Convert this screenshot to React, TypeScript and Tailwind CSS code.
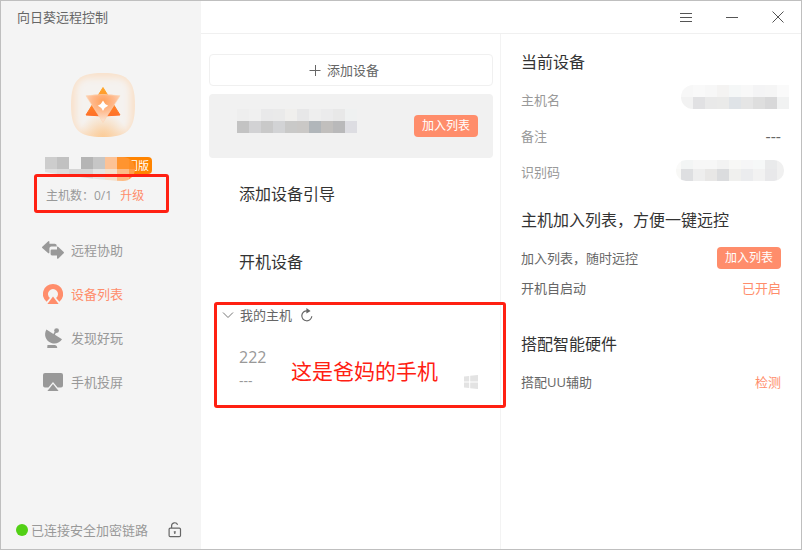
import type { ReactNode } from 'react';
import { clsx } from 'clsx';

type NavItem = {
  label: string;
  icon: ReactNode;
  active?: boolean;
};

const navItems: NavItem[] = [
  {
    label: '远程协助',
    icon: (
      <svg width="22" height="20" viewBox="0 0 22 20" fill="currentColor">
        <path d="M.3 6.8 6 1.4Q7.4.4 7.4 2V3.8H12.6Q14.8 3.8 14.8 6V6.6H9.4Q7.4 6.6 7.4 8.6V12.6Q7.4 14 6 13L.3 8Q-.3 7.4.3 6.8Z" />
        <path d="M21.7 13.2 16.4 18.4Q15 19.4 15 18V15.4H10Q8.6 15.4 8.6 14V10.6Q8.6 9.4 9.8 9.4H15V7.4Q15 6 16.4 7L21.7 12Q22.3 12.6 21.7 13.2Z" />
      </svg>
    ),
  },
  {
    label: '设备列表',
    active: true,
    icon: (
      <svg width="20" height="20" viewBox="0 0 20 20" fill="currentColor">
        <path d="M10 0A10 10 0 0 0 3.6 17.7L6.9 14A5 5 0 1 1 13.1 14L16.4 17.7A10 10 0 0 0 10 0Z" />
        <path d="M10 12.6 15.6 20H4.4Z" />
      </svg>
    ),
  },
  {
    label: '发现好玩',
    icon: (
      <svg width="20" height="20" viewBox="0 0 20 20" fill="currentColor">
        <path d="M3.4 1.4 10.4 6 11.8 3.4 13.2 4.2 11.9 6.8 19 11.2C17 14.6 12.6 16.4 8.4 14.9 2.4 12.8.6 6.4 3.4 1.4Z" />
        <circle cx="13.6" cy="2.6" r="2.4" />
        <path d="M4.5 17H12Q14.3 17.6 14.3 20H4.2Z" />
      </svg>
    ),
  },
  {
    label: '手机投屏',
    icon: (
      <svg width="20" height="20" viewBox="0 0 20 20" fill="currentColor">
        <path d="M2 1H18Q20 1 20 3V13.5Q20 15.5 18 15.5H14.6L10 10 5.4 15.5H2Q0 15.5 0 13.5V3Q0 1 2 1Z" />
        <path d="M10 12 15.6 19H4.4Z" />
      </svg>
    ),
  },
];

const deviceTiles = [
  ['#eeeeee', '#f0f0f0', '#e9e9ea', '#eaeaea', '#f0efed', '#e7e7e8', '#eeeeee', '#ebebec', '#e8e8e8', '#eff1f1'],
  ['#c3c3c3', '#d2d2d4', '#c9c9c9', '#d2d3d5', '#c9c9c8', '#cac8c6', '#b1b6ba', '#c1bfbd', '#b9b9ba', '#dddde2'],
];

const hostTiles = [
  ['#f7f7f7', '#f9f9f9', '#f7f7f7', '#f4f3f2', '#f5f7f7', '#f8f8f8', '#f4f4f5', '#f5f5f5', '#fafafa'],
  ['#f2f2f2', '#e1e1e3', '#e9e9e9', '#eaeae9', '#dfe3e7', '#e5e5e5', '#dedede', '#d8d8d9', '#f1f2f2'],
];

const codeTiles = [
  ['#fafaf9', '#f3f5f5', '#f7f7f7', '#f7f7f7', '#f3f3f3', '#f8f8f6', '#f6f6f7', '#f6f8f8', '#e9eaeb', '#f0f0f0'],
  ['#f8f8f6', '#dedfe1', '#eeeeee', '#e8e7e6', '#dbdcde', '#f0f0ee', '#ebecee', '#f2f2f2', '#e8e8ea', '#f0f0f0'],
];

const nameTiles = [
  ['#cdcdcd', '#c1c1c1', '#f4f4f4', '#b5b5b5', '#c6c6c6', '#fcc296', '#ff942f', '#ff8f24'],
  ['#e0e0e0', '#dcdcdc', '#d6d6d6', '#d6d6d6', '#e4e4e4', '#f5dfcb', '#fdbb85', '#ff9f4a'],
];

function Mosaic({ tiles, className }: { tiles: string[][]; className?: string }) {
  return (
    <svg
      width={tiles[0].length * 12}
      height={24}
      shapeRendering="crispEdges"
      aria-hidden="true"
      className={className}
    >
      {tiles.map((row, y) =>
        row.map((color, x) => (
          <rect key={`${x}-${y}`} x={x * 12} y={y * 12} width="12" height="12" fill={color} />
        ))
      )}
    </svg>
  );
}

function Logo() {
  return (
    <svg width="64" height="64" viewBox="0 0 64 64" className="ml-1" aria-hidden="true">
      <defs>
        <clipPath id="tile">
          <path d="M32 0C54 0 64 5 64 32S54 64 32 64 0 59 0 32 10 0 32 0Z" />
        </clipPath>
        <filter id="soft" x="-20%" y="-20%" width="140%" height="140%">
          <feGaussianBlur stdDeviation="3" />
        </filter>
        <radialGradient id="glow" cx="0.5" cy="1" r="0.38">
          <stop offset="0" stopColor="#fbcc98" />
          <stop offset="1" stopColor="#fbcc98" stopOpacity="0" />
        </radialGradient>
        <linearGradient id="up" x1="0" y1="0" x2="0" y2="1">
          <stop offset="0" stopColor="#ffa82c" />
          <stop offset="1" stopColor="#ff6f28" />
        </linearGradient>
        <radialGradient id="down" cx="0.5" cy="0.25" r="0.65">
          <stop offset="0" stopColor="#ffa05a" />
          <stop offset="0.5" stopColor="#ffb98c" />
          <stop offset="1" stopColor="#fbdfcb" />
        </radialGradient>
      </defs>
      <g clipPath="url(#tile)">
        <rect width="64" height="64" fill="#f9e2cc" />
        <rect x="5" y="5" width="54" height="54" rx="13" fill="#f5f2ef" filter="url(#soft)" />
        <rect width="64" height="64" fill="url(#glow)" />
      </g>
      <path
        d="M32 14.5 49 42Q32 44 15 42Z"
        fill="url(#up)"
        stroke="url(#up)"
        strokeWidth="1"
        strokeLinejoin="round"
      />
      <path
        d="M32 49.5 15 22.8Q32 20 49 22.8Z"
        fill="url(#down)"
        stroke="#fbd5b4"
        strokeWidth="0.6"
        strokeLinejoin="round"
      />
      <path d="M32 27.5Q33.4 31.3 37.2 32.7 33.4 34.1 32 38 30.6 34.1 26.8 32.7 30.6 31.3 32 27.5Z" fill="#fff" />
    </svg>
  );
}

function JoinButton() {
  return (
    <button type="button" className="h-[22px] w-16 rounded bg-[#ff8d6b] text-xs leading-[22px] text-white">
      加入列表
    </button>
  );
}

function Row({ label, tall, children }: { label: string; tall?: boolean; children: ReactNode }) {
  return (
    <div
      className={clsx(
        'flex items-center justify-between',
        tall ? 'h-9 text-[#999999]' : 'h-[30px] text-[#666666]'
      )}
    >
      <span>{label}</span>
      {children}
    </div>
  );
}

function Sidebar() {
  return (
    <aside className="flex w-[200px] shrink-0 flex-col bg-[#f4f4f4] text-[#999999]">
      <h1 className="flex h-8 items-center pl-4 text-[#666666]">向日葵远程控制</h1>
      <div className="mt-10 flex justify-center">
        <Logo />
      </div>

      <div className="relative mt-5 ml-11 flex h-[17px] w-[107px] justify-end">
        <span className="w-[42px] rounded-sm bg-[#ff8400] pr-[3px] text-right text-[11px] leading-[17px] text-white">
          门版
        </span>
        <Mosaic
          tiles={nameTiles}
          className="absolute top-0 left-0 [clip-path:path('M0_0H78A12_12_0_0_1_78_24Q50_23_0_15Z')]"
        />
      </div>

      <div className="relative ml-[33px] flex h-[39px] w-[135px] items-center gap-2 rounded-[3px] border-3 border-[#ff2012] pt-1 pl-[9px] text-xs">
        <span>主机数：0/1</span>
        <a href="#upgrade" className="text-[#ff8d6b]">
          升级
        </a>
      </div>

      <nav className="mt-[15px]">
        {navItems.map((item) => (
          <a
            key={item.label}
            href="#nav"
            className={clsx('flex h-11 items-center pl-[41px]', item.active && 'text-[#ff8d6b]')}
          >
            <span className="flex w-[22px] justify-center">{item.icon}</span>
            <span className="ml-[7px]">{item.label}</span>
          </a>
        ))}
      </nav>

      <footer className="mt-auto flex h-[38px] items-center pl-[15px]">
        <span className="mr-[3px] h-3 w-3 rounded-full bg-[#52d015]" />
        <span>已连接安全加密链路</span>
        <svg
          width="14"
          height="16"
          viewBox="0 0 14 16"
          fill="none"
          stroke="#666666"
          strokeWidth="1.2"
          className="ml-5"
        >
          <rect x="1.1" y="6.1" width="11.4" height="8.6" rx="1.2" />
          <path d="M3.6 6V4A3.1 3.1 0 0 1 9.6 2.8" />
          <path d="M6.8 9.2V12M5.8 9.8H7.8" />
        </svg>
      </footer>
    </aside>
  );
}

function TitleBar() {
  return (
    <header className="flex h-[33px] items-center justify-end gap-8 border-b border-[#f0f0f0] pr-4 text-[#555555]">
      <button type="button" aria-label="菜单">
        <svg width="14" height="14" viewBox="0 0 14 14" stroke="currentColor">
          <path d="M1 3.5H13M1 7.5H13M1 11.5H13" />
        </svg>
      </button>
      <button type="button" aria-label="最小化">
        <svg width="14" height="14" viewBox="0 0 14 14" stroke="currentColor">
          <path d="M1 7.5H13" />
        </svg>
      </button>
      <button type="button" aria-label="关闭">
        <svg width="14" height="14" viewBox="0 0 14 14" stroke="currentColor">
          <path d="M1.5 1.5 12.5 12.5M12.5 1.5 1.5 12.5" />
        </svg>
      </button>
    </header>
  );
}

function DeviceList() {
  return (
    <section className="border-r border-[#f3f3f3] pt-5 pr-[7px] pl-2">
      <button
        type="button"
        className="flex h-8 w-full items-center justify-center gap-1.5 rounded border border-[#f0f0f0] pr-3.5 text-[#666666]"
      >
        <svg width="12" height="12" viewBox="0 0 12 12" stroke="currentColor">
          <path d="M0.5 6.5H11.5M6.5 1V12" />
        </svg>
        添加设备
      </button>

      <div className="mt-2 flex h-16 items-center justify-between rounded bg-[#f1f1f1] pr-[15px] pl-7">
        <Mosaic tiles={deviceTiles} className="-mt-2.5" />
        <JoinButton />
      </div>

      <h2 className="mt-6 pl-[30px] text-base leading-6 text-[#333333]">添加设备引导</h2>
      <h2 className="mt-11 pl-[30px] text-base leading-6 text-[#333333]">开机设备</h2>

      <div className="relative mt-7 ml-[5px] h-[106px]">
        <div className="flex h-[26px] items-center pl-2 text-[#666666]">
          <svg width="12" height="12" viewBox="0 0 12 12" fill="none" stroke="#777777">
            <path d="M1 3.5 6 8.5 11 3.5" />
          </svg>
          <span className="ml-[6px]">我的主机</span>
          <button type="button" aria-label="刷新" className="ml-2">
            <svg width="14" height="14" viewBox="0 0 14 14" fill="none" stroke="currentColor" strokeWidth="1.2">
              <path d="M7.2 2.8A5 5 0 1 0 11.8 8.2" />
              <path d="M6.4 0 10.6 2.9 6.4 5.6Z" fill="currentColor" stroke="none" />
            </svg>
          </button>
        </div>
        <div className="mt-[17px] flex items-end justify-between pr-[15px] pl-[25px] text-[#999999]">
          <div>
            <p className="text-base leading-6">222</p>
            <p className="text-sm leading-6">---</p>
          </div>
          <svg width="14" height="14" viewBox="0 0 14 14" fill="#e3e3e3" className="mb-1" aria-hidden="true">
            <path d="M0 1.6 5.2.9V6.5H0ZM6.2.8 14 0V6.5H6.2ZM0 7.5H5.2V13.1L0 12.4ZM6.2 7.5H14V14L6.2 13.2Z" />
          </svg>
        </div>
        {/* callout drawn over the host group */}
        <div className="pointer-events-none absolute top-0 -right-[13px] left-0 h-[106px] rounded-[3px] border-3 border-[#ff2012]">
          <p className="mt-[50px] ml-[74px] text-[21px] leading-8 text-[#ff2012]">这是爸妈的手机</p>
        </div>
      </div>
    </section>
  );
}

function DeviceDetail() {
  return (
    <section className="px-5 pt-4">
      <h2 className="text-base leading-6 text-[#333333]">当前设备</h2>
      <div className="mt-2">
        <Row label="主机名" tall>
          <Mosaic tiles={hostTiles} className="-mt-1.5 -mr-2 rounded-l-full" />
        </Row>
        <Row label="备注" tall>
          <span className="text-base text-[#666666]">---</span>
        </Row>
        <Row label="识别码" tall>
          <Mosaic tiles={codeTiles} className="-mt-1.5 -mr-2 [clip-path:inset(3px_5px_0_7px_round_10px)]" />
        </Row>
      </div>

      <h2 className="mt-[18px] text-base leading-6 text-[#333333]">主机加入列表，方便一键远控</h2>
      <div className="mt-[11px]">
        <Row label="加入列表，随时远控">
          <JoinButton />
        </Row>
        <Row label="开机自启动">
          <a href="#autostart" className="text-[#ff8d6b]">
            已开启
          </a>
        </Row>
      </div>

      <h2 className="mt-[29px] text-base leading-6 text-[#333333]">搭配智能硬件</h2>
      <div className="mt-[11px]">
        <Row label="搭配UU辅助">
          <a href="#detect" className="text-[#ff8d6b]">
            检测
          </a>
        </Row>
      </div>
    </section>
  );
}

export default function App() {
  return (
    <div className="flex min-h-screen border border-[#bfbfbf] bg-white font-['Open_Sans','Noto_Sans_CJK_SC',sans-serif] text-[13px] leading-5">
      <Sidebar />
      <main className="flex min-w-0 flex-1 flex-col">
        <TitleBar />
        <div className="grid flex-1 grid-cols-2">
          <DeviceList />
          <DeviceDetail />
        </div>
      </main>
    </div>
  );
}
